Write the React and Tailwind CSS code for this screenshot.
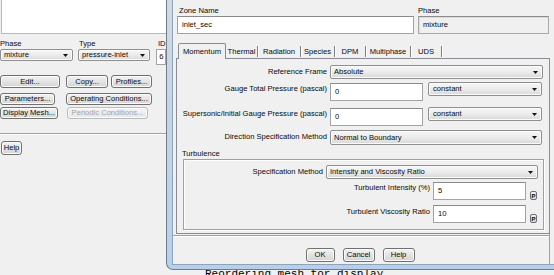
import React from "react";

function Arrow() {
  return (
    <svg width="5" height="3" viewBox="0 0 5 3" className="shrink-0">
      <path d="M0 0H5L2.5 3Z" fill="#111" />
    </svg>
  );
}

function Select({ className = "", text, pl = "pl-[3px]" }) {
  return (
    <div
      className={`flex items-center justify-between border border-[#8e8f8f] rounded-[2px] bg-linear-to-b from-[#f6f6f6] via-[#ececec] to-[#d8d8d8] shadow-[inset_0_0_0_1px_#fbfbfb] ${pl} pr-[4px] ${className}`}
    >
      <span className="whitespace-nowrap">{text}</span>
      <Arrow />
    </div>
  );
}

function Btn({ className = "", children, disabled = false }) {
  return (
    <div
      className={`flex items-center justify-center whitespace-nowrap rounded-[3px] border bg-linear-to-b shadow-[inset_0_0_0_1px_#fcfcfc] ${
        disabled
          ? "border-[#b8bcbf] from-[#f4f4f4] to-[#e6e6e6] text-[#a3a3a3]"
          : "border-[#707070] from-[#f3f3f3] to-[#d4d4d4] text-[#0a0a0a]"
      } ${className}`}
    >
      {children}
    </div>
  );
}

function Input({ className = "", text }) {
  return (
    <div
      className={`flex items-center bg-white border border-[#a3a3a3] border-t-[#8a8a8a] pl-[4px] ${className}`}
    >
      <span>{text}</span>
    </div>
  );
}

function PBtn() {
  return (
    <div className="w-[7px] h-[9px] rounded-[2px] border border-[#6f6f6f] bg-linear-to-b from-[#f4f4f4] to-[#d3d3d3] flex items-center justify-center text-[6px] font-bold leading-none">
      P
    </div>
  );
}

function LeftPanel() {
  return (
    <div className="w-[166px] shrink-0 flex flex-col">
      <div className="ml-[1px] h-[34px] bg-white border-l border-b border-[#b9b9b9]" />
      <div className="mt-[6px] h-[8px] flex items-center">
        <span className="w-[79px]">Phase</span>
        <span className="w-[79px]">Type</span>
        <span>ID</span>
      </div>
      <div className="mt-[1px] h-[12px] flex">
        <Select className="w-[75px] h-[12px]" text="mixture" />
        <Select className="ml-[5px] w-[74px] h-[12px]" text="pressure-inlet" />
        <div className="ml-[6px] w-[10px] h-[16px] bg-white border border-[#a3a3a3] pl-[2px] flex items-center">
          6
        </div>
      </div>
      <div className="mt-[14px] h-[13px] flex">
        <Btn className="w-[60px]">Edit...</Btn>
        <Btn className="ml-[6px] w-[42px]">Copy...</Btn>
        <Btn className="ml-[3px] w-[41px]">Profiles...</Btn>
      </div>
      <div className="mt-[5px] h-[12px] flex">
        <Btn className="w-[55px]">Parameters...</Btn>
        <Btn className="ml-[11px] w-[86px]">Operating Conditions...</Btn>
      </div>
      <div className="mt-[2px] h-[12px] flex">
        <Btn className="w-[58px]">Display Mesh...</Btn>
        <Btn disabled className="ml-[9px] w-[81px]">
          Periodic Conditions...
        </Btn>
      </div>
      <div className="mt-[14px] border-t border-b border-t-[#a0a0a0] border-b-white" />
      <Btn className="mt-[6px] ml-[1px] w-[21px] h-[14px]">Help</Btn>
    </div>
  );
}

const tabs = [
  ["Thermal", "w-[32px]"],
  ["Radiation", "w-[43px]"],
  ["Species", "w-[34px]"],
  ["DPM", "w-[31px]"],
  ["Multiphase", "w-[45px]"],
  ["UDS", "w-[31px]"],
];

function FormRow({ label, children, mt }) {
  return (
    <div className={`flex items-start ${mt}`}>
      <div className="w-[150px] h-[14px] flex items-center justify-end whitespace-nowrap">
        {label}
      </div>
      <div className="ml-[3px] flex items-start">{children}</div>
    </div>
  );
}

function Dialog() {
  return (
    <div className="h-[270px] w-[388px] shrink-0 flex rounded-bl-[7px] border-l border-b border-[#6d7d8f] bg-linear-to-b from-[#d2d9e1] via-[#c3d4e6] to-[#b6d0ec] pl-[5px] pb-[4px]">
      <div className="flex-1 flex flex-col border-l border-b border-[#8fa2b6] bg-[#f0f0f0]">
        <div className="mt-[7px] h-[8px] flex items-center">
          <span className="ml-[6px] w-[239px]">Zone Name</span>
          <span>Phase</span>
        </div>
        <div className="mt-[1px] h-[18px] flex">
          <Input className="ml-[4px] w-[237px] h-[18px]" text="inlet_sec" />
          <div className="ml-[4px] w-[131px] h-[18px] border border-[#a8a8a8] border-t-[#8c8c8c] shadow-[inset_1px_1px_0_#dcdcdc] bg-[#f0f0f0] flex items-center pl-[4px]">
            mixture
          </div>
        </div>
        <div className="mt-[9px] ml-[5px] h-[15px] flex items-end">
          <div className="w-[48px] h-[16px] -mb-px relative z-10 border border-b-0 border-[#898c95] rounded-t-[2px] bg-[#f0f0f0] flex items-center justify-center">
            Momentum
          </div>
          {tabs.map(([t, w]) => (
            <div
              key={t}
              className={`${w} h-[11px] mb-[1px] flex items-center justify-center border-r border-[#7f7f7f] shadow-[1px_0_0_#ffffff]`}
            >
              {t}
            </div>
          ))}
        </div>
        <div className="ml-[3px] w-[374px] h-[176px] border border-[#898c95] flex flex-col">
          <FormRow label="Reference Frame" mt="mt-[6px]">
            <Select className="w-[213px] h-[14px]" text="Absolute" />
          </FormRow>
          <FormRow label="Gauge Total Pressure (pascal)" mt="mt-[3px]">
            <Input className="mt-[1px] w-[93px] h-[18px]" text="0" />
            <Select className="ml-[5px] w-[114px] h-[14px]" pl="pl-[4px]" text="constant" />
          </FormRow>
          <FormRow label="Supersonic/Initial Gauge Pressure (pascal)" mt="mt-[6px]">
            <Input className="mt-[1px] w-[93px] h-[18px]" text="0" />
            <Select className="ml-[5px] w-[114px] h-[14px]" pl="pl-[4px]" text="constant" />
          </FormRow>
          <FormRow label="Direction Specification Method" mt="mt-[4px]">
            <Select className="w-[212px] h-[15px]" text="Normal to Boundary" />
          </FormRow>
          <div className="mt-[5px] ml-[5px] h-[8px] flex items-center">Turbulence</div>
          <div className="mt-[1px] ml-[6px] w-[361px] h-[71px] border border-[#a0a0a0] shadow-[inset_1px_1px_0_#ffffff,1px_1px_0_#ffffff] flex flex-col">
            <div className="mt-[5px] flex items-center">
              <div className="w-[139px] text-right whitespace-nowrap">Specification Method</div>
              <Select className="ml-[3px] w-[212px] h-[14px]" text="Intensity and Viscosity Ratio" />
            </div>
            <div className="mt-[3px] flex items-start">
              <div className="w-[246px] h-[11px] flex items-center justify-end whitespace-nowrap">
                Turbulent Intensity (%)
              </div>
              <Input className="ml-[3px] w-[93px] h-[18px]" text="5" />
              <div className="ml-[4px] mt-[9px]">
                <PBtn />
              </div>
            </div>
            <div className="mt-[5px] flex items-start">
              <div className="w-[246px] h-[11px] mt-[1px] flex items-center justify-end whitespace-nowrap">
                Turbulent Viscosity Ratio
              </div>
              <Input className="ml-[3px] w-[93px] h-[18px]" text="10" />
              <div className="ml-[4px] mt-[9px]">
                <PBtn />
              </div>
            </div>
          </div>
        </div>
        <div className="flex-1 w-[377px] flex flex-col border-r border-[#a0a0a0]">
          <div className="mt-[1px] border-t border-b border-t-[#a0a0a0] border-b-white" />
          <div className="mt-[11px] h-[14px] flex justify-center gap-[8px] pr-[2px]">
            <Btn className="w-[29px]">OK</Btn>
            <Btn className="w-[32px]">Cancel</Btn>
            <Btn className="w-[32px]">Help</Btn>
          </div>
        </div>
      </div>
    </div>
  );
}

export default function App() {
  return (
    <div className="w-[554px] h-[275px] overflow-hidden bg-[#f0f0f0] flex text-[7.6px] leading-none text-[#080808] font-['Liberation_Sans',Arial,sans-serif]">
      <LeftPanel />
      <div className="flex flex-col w-[388px] shrink-0">
        <Dialog />
        <div className="h-[5px] overflow-hidden pl-[39px]">
          <div className="mt-[-1px] text-[11px] leading-[11px] text-black whitespace-nowrap font-['Liberation_Mono',monospace]">
            Reordering mesh for display...
          </div>
        </div>
      </div>
    </div>
  );
}
